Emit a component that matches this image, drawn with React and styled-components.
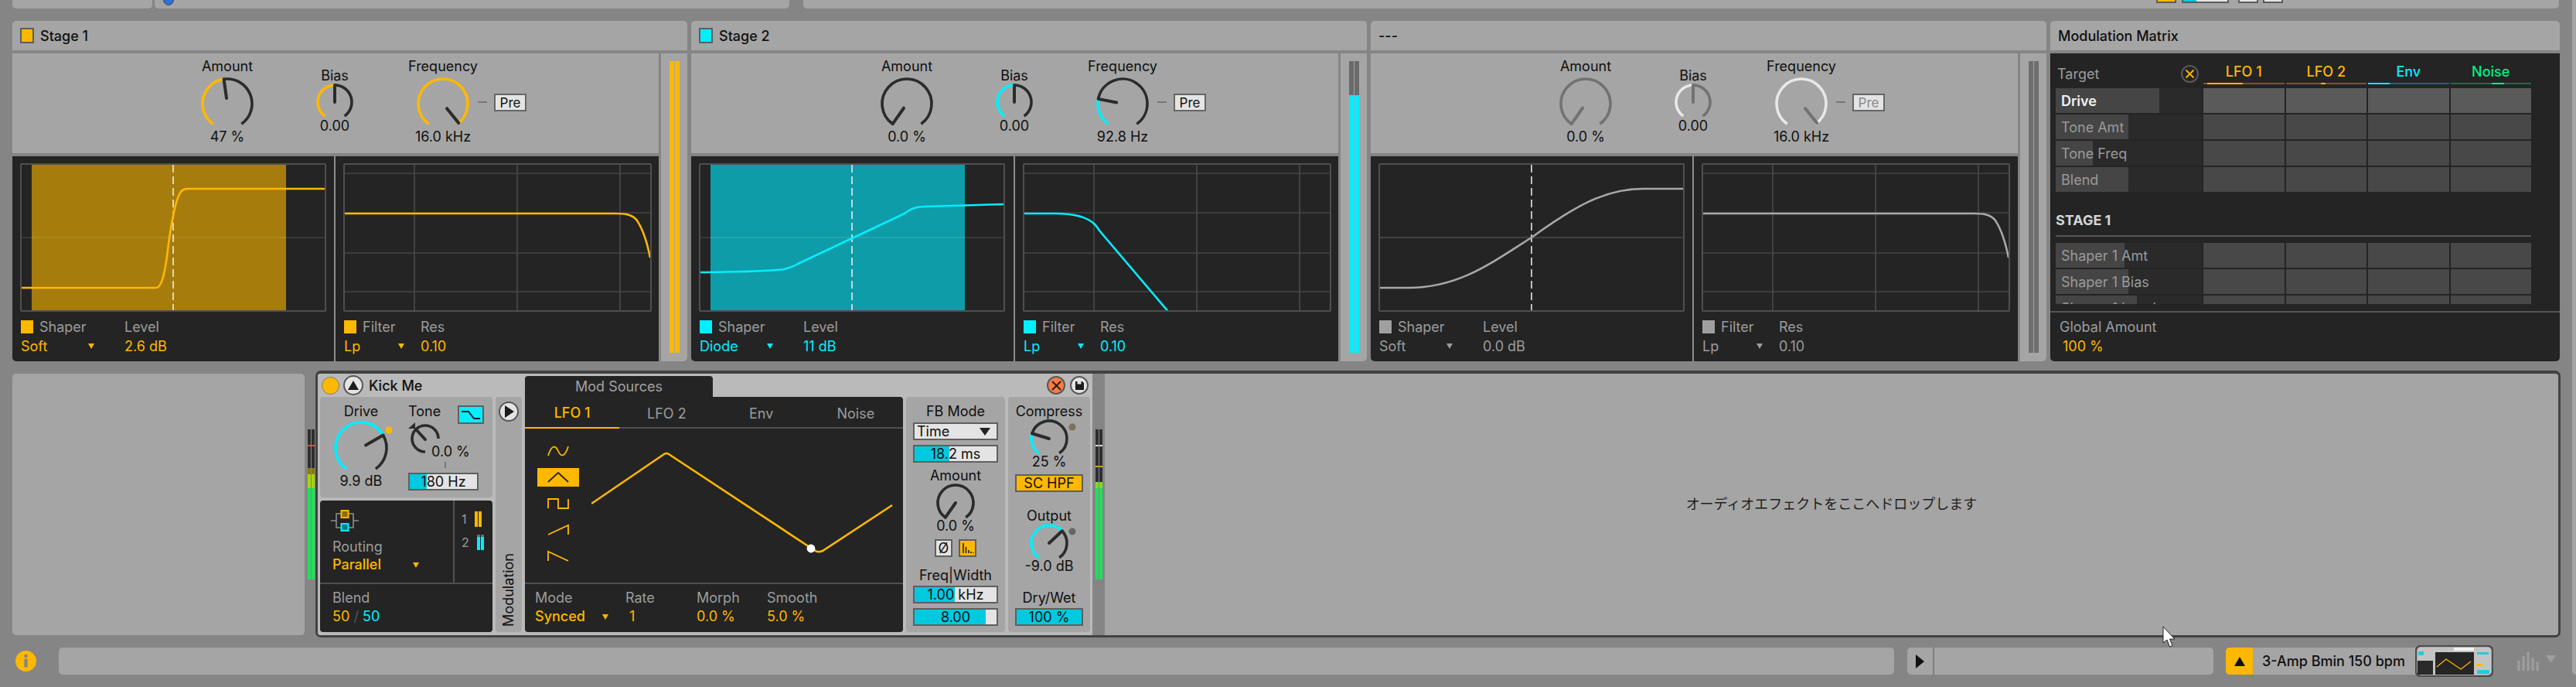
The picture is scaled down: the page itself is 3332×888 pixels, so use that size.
import React from 'react';
import styled, { createGlobalStyle } from 'styled-components';

const BG = '#858585', PANEL = '#a5a5a5', DARK = '#242424', ORANGE = '#ffb800', CYAN = '#03eeff', FILL = '#00c9e0', LIGHT = '#bababa';

const Global = createGlobalStyle`
  html, body { margin: 0; padding: 0; background: ${BG}; }
  body { font-family: Inter, "Noto Sans", "Noto Sans CJK JP", sans-serif; font-size: 18px; color: #101010; }
  * { box-sizing: border-box; }
`;

const Page = styled.div`position: relative; display: flex; width: 3332px; height: 888px; overflow: hidden; background: ${BG};`;
const Main = styled.main`width: 3327px; flex: none;`;
const SidePeek = styled.aside`width: 5px; height: 872px; flex: none; background: ${PANEL}; border-radius: 0 0 0 5px;`;

/* top strip */
const TopStrip = styled.div`display: flex; height: 11px; padding-left: 16px; overflow: hidden;`;
const TopSeg = styled.div`
  display: flex; height: 11px; width: ${p => p.$w}px; margin-left: ${p => p.$ml || 0}px;
  background: ${PANEL}; border-radius: 0 0 5px 5px; overflow: hidden; justify-content: ${p => p.$end ? 'flex-end' : 'flex-start'};
  padding-right: ${p => p.$pr || 0}px;
`;
const BlueDot = styled.span`width: 14px; height: 14px; border-radius: 50%; background: #2f6fd6; margin: -7px 0 0 11px; border: 1px solid #4a4a4a;`;
const TopBtn = styled.span`
  display: block; height: 4px; width: ${p => p.$w}px; margin-left: ${p => p.$ml}px;
  border: 2px solid #5c5c5c; border-top: 0; background: ${p => p.$bg};
`;

/* upper rack */
const Rack = styled.div`display: flex; gap: 5px; height: 440px; margin-top: 16px; padding-left: 16px;`;
const Card = styled.section`display: flex; flex-direction: column; gap: 4px; width: ${p => p.$w}px;`;
const CardHead = styled.header`
  display: flex; align-items: center; gap: 8px; height: 38px; padding-left: 10px; background: ${PANEL};
  border-radius: 5px 5px 0 0; font-weight: 500;
`;
const HeadToggle = styled.span`width: 18px; height: 20px; background: ${p => p.$c}; border: 2px solid #5d5d5d;`;
const StageBody = styled.div`display: flex; gap: 3px; flex: 1; min-height: 0;`;
const StageMain = styled.div`display: flex; flex-direction: column; gap: 4px; flex: 1; min-width: 0;`;
const Controls = styled.div`display: flex; align-items: flex-start; height: 129px; padding-left: ${p => p.$pl}px; background: ${PANEL};`;
const KnobCol = styled.div`
  display: flex; flex-direction: column; align-items: center; width: 80px; flex: none;
  padding-top: ${p => p.$pt}px; margin-left: ${p => p.$ml || 0}px;
`;
const Label = styled.div`line-height: 20px; white-space: nowrap;`;
const KnobSvg = styled.svg`display: block; flex: none; margin-top: ${p => p.$mt || 0}px;`;
const Value = styled.div`line-height: 18px; white-space: nowrap; margin-top: ${p => p.$mt || 0}px;`;
const Dash = styled.span`width: 12px; height: 2px; background: #777; margin: 62px 9px 0 5px;`;
const PreBtn = styled.div`
  width: 42px; height: 23px; margin-top: 52px; border: 2px solid #666; background: #e4e4e4; display: flex; align-items: center; justify-content: center;
  color: ${p => p.$dim ? '#8a8a8a' : '#141414'}; font-size: 17px; line-height: 18px;
`;
const DarkRow = styled.div`display: flex; flex: 1; background: ${DARK}; border-radius: 0 0 0 5px;`;
const Pane = styled.div`
  width: ${p => p.$w ? `${p.$w}px` : 'auto'}; flex: ${p => p.$w ? 'none' : 1}; padding: 9px 10px 0 ${p => p.$pl}px;
  border-right: ${p => p.$div ? '2px solid #8e8e8e' : '0'};
`;
const GraphBox = styled.div`width: ${p => p.$w}px; height: 192px; border: 2px solid #4f4f4f; border-radius: 2px; overflow: hidden;`;
const GraphSvg = styled.svg`display: block;`;
const ParamGrid = styled.div`
  display: grid; grid-template-columns: ${p => p.$col}px auto; justify-content: start; margin-top: 7px; line-height: 25px;
  color: #9c9c9c; padding-left: 1px;
`;
const ToggleLabel = styled.div`display: flex; align-items: center; gap: 8px;`;
const SmallToggle = styled.span`width: 16px; height: 17px; background: ${p => p.$c};`;
const PickVal = styled.div`display: flex; align-items: center; justify-content: space-between; width: ${p => p.$w}px; color: ${p => p.$c};`;
const Val = styled.div`color: ${p => p.$c};`;
const Strong = styled.span`font-weight: 500;`;
const Caret = styled.span`
  width: 0; height: 0; border-left: 4.5px solid transparent; border-right: 4.5px solid transparent;
  border-top: 7px solid ${p => p.$c}; flex: none;
`;
const MeterStrip = styled.div`display: flex; justify-content: center; gap: 1px; width: 34px; background: ${PANEL}; padding: 10px 0 11px; border-radius: 0 0 5px 0;`;
const StripBar = styled.span`
  width: 6px; background: linear-gradient(${p => p.$top} ${p => p.$split}px, ${p => p.$c} ${p => p.$split}px);
`;

/* matrix */
const MatrixBody = styled.div`display: flex; flex-direction: column; flex: 1; background: ${DARK}; border-radius: 0 0 5px 5px;`;
const MatrixScroll = styled.div`height: 324px; overflow: hidden; padding: 8px 0 0 7px;`;
const MatrixGrid = styled.div`display: grid; grid-template-columns: 189px repeat(4, 104.5px); column-gap: 2px; row-gap: 2px; grid-auto-rows: 32px;`;
const MatrixHead = styled(MatrixGrid)`margin-bottom: 5px;`;
const TargetCell = styled.div`display: flex; align-items: center; justify-content: space-between; padding: 4px 4px 0 2px; color: #9c9c9c;`;
const ClearBtn = styled.span`display: flex; width: 23px; height: 23px; border: 2px solid #585858; border-radius: 50%; align-items: center; justify-content: center;`;
const ColHead = styled.div`display: flex; flex-direction: column; align-items: center; padding-top: 4px; color: ${p => p.$c}; line-height: 24px; font-weight: 500;`;
const ColBar = styled.span`
  display: block; align-self: stretch; height: 2px; margin-top: 2px;
  background: linear-gradient(to right, ${p => p.$dim} ${p => p.$a}%, ${p => p.$c} ${p => p.$a}%, ${p => p.$c} ${p => p.$b}%, ${p => p.$dim} ${p => p.$b}%);
`;
const RowLabel = styled.div`
  display: flex; align-items: center; padding-left: 7px; white-space: nowrap;
  color: ${p => p.$on ? '#f2f2f2' : '#9a9a9a'}; font-weight: ${p => p.$on ? 600 : 400};
  background: linear-gradient(to right, #454545 ${p => p.$w}px, #2a2a2a ${p => p.$w}px);
`;
const Cell = styled.div`background: ${p => p.$on ? '#5a5a5a' : '#484848'};`;
const GroupHead = styled.div`margin-top: 24px; line-height: 26px; font-weight: 700; color: #d4d4d4;`;
const GroupRule = styled.div`width: 615px; height: 2px; margin: 6px 0 8px; background: #555;`;
const MatrixFoot = styled.div`margin-top: 9px; padding: 6px 0 0 12px; border-top: 2px solid #555; line-height: 25px; color: #9c9c9c;`;
const FootVal = styled.div`color: ${ORANGE}; padding-left: 4px;`;

/* device row */
const DeviceRow = styled.div`display: flex; height: 345px; margin-top: 12px; padding-left: 16px;`;
const EmptyCard = styled.div`width: 378px; height: 338px; margin-top: 4px; background: ${PANEL}; border-radius: 5px;`;
const MeterHolder = styled.div`display: flex; gap: 1px; flex: none; width: ${p => p.$w}px; padding: ${p => p.$pt}px 0 0 ${p => p.$pl}px; background: ${p => p.$bg || 'transparent'};`;
const MeterBar = styled.span`display: block; width: 4px; height: 194px; background: ${p => p.$g};`;
const ChainFrame = styled.div`
  display: flex; width: 2904.5px; margin-left: 0.5px; border: solid #424242; border-width: 4px 3px 3px 3px; border-radius: 7px; background: ${PANEL}; overflow: hidden;
`;
const Device = styled.div`display: flex; gap: 4px; width: 1002.5px; padding: 0 4px 4px 3.5px; background: ${LIGHT}; flex: none;`;
const DevCol = styled.div`display: flex; flex-direction: column; width: ${p => p.$w}px; flex: none;`;
const TitleRow = styled.div`display: flex; align-items: center; height: 30px; padding-left: 2px; gap: 5px; font-weight: 500; flex: none;`;
const PowerDot = styled.span`width: 23px; height: 23px; border-radius: 50%; background: ${ORANGE}; border: 1.5px solid #7a7a7a;`;
const RoundBtn = styled.span`
  display: flex; align-items: center; justify-content: center; width: ${p => p.$s}px; height: ${p => p.$s}px; border-radius: 50%;
  background: ${p => p.$bg || '#e4e4e4'}; border: 2.5px solid #585858; flex: none;
`;
const DeviceName = styled.span`margin-left: 2px; font-weight: 500;`;
const GrayPanel = styled.div`
  display: flex; background: ${PANEL}; border-radius: 4px; flex: ${p => p.$h ? 'none' : 1}; height: ${p => p.$h ? `${p.$h}px` : 'auto'};
  flex-direction: ${p => p.$col ? 'column' : 'row'}; align-items: ${p => p.$col ? 'center' : 'stretch'}; padding-top: ${p => p.$pt || 0}px;
`;
const DriveCol = styled.div`display: flex; flex-direction: column; align-items: center; width: 106px; padding-top: 10px;`;
const ToneCol = styled.div`display: flex; flex-direction: column; width: 98px; margin-left: 8px; padding-top: 10px;`;
const ToneTop = styled.div`display: flex; height: 25px; align-items: flex-start;`;
const ToneLabel = styled.div`width: 40px; text-align: center; line-height: 18px;`;
const LpBtn = styled.div`display: flex; width: 34px; height: 24px; margin: 1px 0 0 24px; background: ${CYAN}; border: 2px solid #5f5f5f; align-items: center; justify-content: center;`;
const ToneMid = styled.div`display: flex; height: 48px; margin-top: -3px; align-items: flex-start;`;
const ToneValue = styled.div`align-self: flex-end; margin-left: -14px; line-height: 18px; white-space: nowrap;`;
const Tick = styled.span`display: block; width: 2px; height: 8px; background: #777; margin: 4px 0 0 47px;`;
const SliderBox = styled.div`
  position: relative; display: flex; align-items: center; justify-content: center; flex: none;
  width: ${p => p.$w}px; height: 23px; margin-top: ${p => p.$mt || 0}px; border: 2px solid #5f5f5f; line-height: 19px;
  background: linear-gradient(to right, ${FILL} ${p => p.$pct}%, #e4e4e4 ${p => p.$pct}%);
`;
const DarkPanel = styled.div`background: ${DARK}; border-radius: ${p => p.$r || '4px'}; color: #9c9c9c;`;
const RoutingPanel = styled(DarkPanel)`display: flex; flex-direction: column; margin-top: 4px; height: 170px;`;
const RoutingTop = styled.div`display: flex; height: 106px;`;
const RoutingLeft = styled.div`width: 174px; padding: 12px 0 0 14px; border-right: 2px solid #505050;`;
const RoutingSvg = styled.svg`display: block;`;
const RoutingText = styled.div`line-height: 20px; margin-top: ${p => p.$mt}px; padding-left: 2px;`;
const RoutingRight = styled.div`display: flex; flex-direction: column; gap: 10px; padding: 14px 0 0 9px;`;
const ChainMeter = styled.div`display: flex; align-items: center; gap: 10px; height: 20px; font-size: 16px;`;
const ChainBars = styled.span`display: flex; gap: 1px;`;
const ChainBar = styled.span`width: 4px; height: 20px; background: linear-gradient(${p => p.$top} ${p => p.$split}px, ${p => p.$c} ${p => p.$split}px);`;
const BottomParams = styled.div`display: flex; border-top: 2px solid #505050; padding: 6px 0 0 ${p => p.$pl}px; line-height: 24px;`;
const ParamCol = styled.div`width: ${p => p.$w}px; flex: none;`;
const ModColumn = styled.div`
  display: flex; flex-direction: column; align-items: center; justify-content: space-between; width: 34px; height: 304px; margin-top: 30px; flex: none;
  background: ${PANEL}; border-radius: 4px; padding: 6px 0 7px;
`;
const PlayBtn = styled(RoundBtn)`padding-left: 2px;`;
const VerticalText = styled.div`writing-mode: vertical-rl; transform: rotate(180deg); line-height: 20px;`;
const TabHead = styled.div`
  display: flex; align-items: center; justify-content: center; width: 243px; height: 27px; margin-top: 3px; flex: none;
  background: ${DARK}; border-radius: 4px 4px 0 0; color: #a2a2a2;
`;
const ModPanel = styled(DarkPanel)`display: flex; flex-direction: column; height: 304px; border-radius: 0 4px 4px 4px;`;
const TabRow = styled.div`display: grid; grid-template-columns: repeat(4, 1fr); height: 41px; border-bottom: 2px solid #505050; flex: none;`;
const Tab = styled.div`
  display: flex; align-items: center; justify-content: center; height: 41px; padding-top: 1px;
  color: ${p => p.$on ? ORANGE : '#9c9c9c'}; font-weight: ${p => p.$on ? 500 : 400}; border-bottom: ${p => p.$on ? `2px solid ${ORANGE}` : '0'};
`;
const ShapeArea = styled.div`display: flex; height: 199px; flex: none;`;
const ShapeCol = styled.div`display: flex; flex-direction: column; gap: 10px; width: 86px; padding: 17px 0 0 16px; flex: none;`;
const ShapeBtn = styled.div`display: flex; width: 54px; height: 24px; align-items: center; justify-content: center; background: ${p => p.$on ? ORANGE : 'transparent'};`;
const SelectBox = styled.div`
  display: flex; align-items: center; justify-content: space-between; flex: none; width: 110px; height: 23px; margin-top: 5px; padding: 0 8px 0 3px;
  background: #e4e4e4; border: 2px solid #5f5f5f; line-height: 19px;
`;
const SelectCaret = styled.span`width: 0; height: 0; border-left: 7px solid transparent; border-right: 7px solid transparent; border-top: 10px solid #222;`;
const PanelLabel = styled.div`line-height: 18px; white-space: nowrap; margin-top: ${p => p.$mt || 0}px; flex: none;`;
const MiniRow = styled.div`display: flex; gap: 8px; margin-top: 8px;`;
const MiniBtn = styled.div`display: flex; width: 23px; height: 23px; align-items: center; justify-content: center; background: ${p => p.$bg}; border: 2px solid #5f5f5f; line-height: 18px;`;
const ActiveBtn = styled.div`display: flex; width: 88px; height: 23px; margin-top: 7px; align-items: center; justify-content: center; background: ${ORANGE}; border: 2px solid #5f5f5f; line-height: 19px; flex: none;`;
const HeaderBtns = styled.div`display: flex; align-items: center; justify-content: flex-end; gap: 6px; height: 30px; padding-right: 2px; flex: none;`;
const DropZone = styled.div`flex: 1; display: flex; align-items: center; justify-content: center; color: #1d1d1d; font-family: "Noto Sans CJK JP", sans-serif; font-size: 18px; padding: 0 0 4px 0;`;

/* status */
const StatusBar = styled.footer`display: flex; align-items: center; height: 41px; margin-top: 10px; padding-left: 20px;`;
const InfoIcon = styled.svg`display: block; flex: none;`;
const LongBar = styled.div`
  display: flex; height: 35px; width: ${p => p.$w}px; margin-left: ${p => p.$ml}px; background: ${PANEL}; border-radius: 5px; flex: none;
`;
const PlayCell = styled.div`display: flex; width: 35px; align-items: center; justify-content: center; border-right: 2px solid #7d7d7d;`;
const PlayGlyph = styled.span`width: 0; height: 0; border-top: 9px solid transparent; border-bottom: 9px solid transparent; border-left: 11px solid #111;`;
const SetBar = styled(LongBar)`align-items: center; width: 250px; margin-left: 16px; border-radius: 5px 0 0 5px;`;
const SetIcon = styled.div`display: flex; width: 35px; height: 35px; align-items: center; justify-content: center; background: ${ORANGE}; border-radius: 5px 0 0 5px;`;
const UpGlyph = styled.span`width: 0; height: 0; border-left: 7px solid transparent; border-right: 7px solid transparent; border-bottom: 12px solid #111;`;
const SetName = styled.div`margin-left: 12px; font-weight: 500; font-size: 18px; white-space: nowrap;`;
const Thumb = styled.svg`display: block; flex: none; margin-left: -5px;`;
const CpuIcon = styled.svg`display: block; flex: none; margin-left: 31px;`;
const Cursor = styled.svg`position: absolute; left: 2797px; top: 809px;`;

/* drawing helpers */
const pt = (cx, cy, r, deg) => {
  const a = deg * Math.PI / 180;
  return [cx + r * Math.sin(a), cy - r * Math.cos(a)];
};
const arc = (cx, cy, r, a0, a1) => {
  const [x0, y0] = pt(cx, cy, r, a0);
  const [x1, y1] = pt(cx, cy, r, a1);
  return `M${x0} ${y0} A${r} ${r} 0 ${a1 - a0 > 180 ? 1 : 0} 1 ${x1} ${y1}`;
};
const Knob = ({ r, w, h, angle, on, track = '#2b2b2b', ptr = '#2b2b2b', inner = 0, dot, mt, end = angle }) => {
  const cx = w / 2, cy = h / 2;
  const [x0, y0] = pt(cx, cy, inner, angle);
  const [x1, y1] = pt(cx, cy, r, angle);
  return (
    <KnobSvg width={w} height={h} viewBox={`0 0 ${w} ${h}`} $mt={mt}>
      {end > -145 && <path d={arc(cx, cy, r, -145, end)} fill="none" stroke={on} strokeWidth="3.6" />}
      {end < 145 && <path d={arc(cx, cy, r, end, 145)} fill="none" stroke={track} strokeWidth="3.6" />}
      <line x1={x0} y1={y0} x2={x1} y2={y1} stroke={ptr} strokeWidth="4" strokeLinecap="round" />
      {dot && <circle cx={cx + dot.dx} cy={cy + dot.dy} r={dot.r} fill={dot.c} />}
    </KnobSvg>
  );
};

const ShaperGraph = ({ color, shade, curve, dashX = 196 }) => (
  <GraphSvg width="392" height="188" viewBox="0 0 392 188">
    {shade && <rect x="13" y="0" width="329" height="188" fill={shade} />}
    <line x1="0" y1="94" x2="392" y2="94" stroke={shade ? 'rgba(255,255,255,.13)' : '#4a4a4a'} strokeWidth="1.5" />
    <line x1={dashX} y1="0" x2={dashX} y2="188" stroke="#f2f2f2" strokeWidth="1.5" strokeDasharray="10 5" />
    <path d={curve} fill="none" stroke={color} strokeWidth="2.6" strokeLinejoin="round" />
  </GraphSvg>
);
const FilterGraph = ({ color, curve }) => (
  <GraphSvg width="395" height="188" viewBox="0 0 395 188">
    {[90, 223, 356].map(x => <line key={x} x1={x} y1="0" x2={x} y2="188" stroke="#4c4c4c" strokeWidth="1.5" />)}
    {[11, 62, 114, 164].map(y => <line key={y} x1="0" y1={y} x2="395" y2={y} stroke="#444" strokeWidth="1.5" />)}
    <path d={curve} fill="none" stroke={color} strokeWidth="2.6" />
  </GraphSvg>
);

const FLAT_LP = 'M0 63 H350 C362 63 372 64 378 72 C386 84 391 100 395 120';

const stages = [
  {
    w: 873, pl: 238, name: 'Stage 1', toggle: ORANGE, c: ORANGE, shape: 'Soft', level: '2.6 dB', shade: '#a67c0c',
    amount: '47 %', amtA: -8, amtOn: ORANGE, bias: ORANGE, freq: '16.0 kHz', freqA: 141, freqOn: ORANGE,
    shaper: 'M0 159 H174 C181 159 185 140 188 118 C192 85 198 50 204 38 C207 32 210 31 216 31 H392',
    filter: FLAT_LP,
    stripC: ORANGE, stripTop: ORANGE, split: 0, mainW: 418,
  },
  {
    w: 874, pl: 239, name: 'Stage 2', toggle: CYAN, c: CYAN, shape: 'Diode', level: '11 dB', shade: '#0e9ca8',
    amount: '0.0 %', amtA: -145, amtOn: '#2b2b2b', bias: CYAN, freq: '92.8 Hz', freqA: -79, freqOn: CYAN,
    shaper: 'M0 139 C50 138 92 138 108 135 C116 133 120 132 126 128 L264 63 C272 56 280 54 290 54 L392 51',
    filter: 'M0 63 H40 C62 63 80 66 91 77 C94 80 95 82 97 85 L188 192',
    stripC: CYAN, stripTop: '#6a6a6a', split: 44, mainW: 419,
  },
  {
    w: 874, pl: 238, name: '---', toggle: null, c: '#a8a8a8', vc: '#9c9c9c', shape: 'Soft', level: '0.0 dB', shade: null, off: true,
    amount: '0.0 %', amtA: -145, amtOn: '#727272', bias: '#e8e8e8', freq: '16.0 kHz', freqA: 141, freqOn: '#e8e8e8',
    shaper: 'M0 159 H36 C100 159 140 130 196 94 C250 55 290 31 340 31 H392',
    filter: FLAT_LP,
    stripC: '#6e6e6e', stripTop: '#6e6e6e', split: 0, mainW: 418,
  },
];

const Stage = ({ s }) => {
  const ptr = s.off ? '#727272' : '#2b2b2b';
  const track = s.off ? '#727272' : '#2b2b2b';
  const vc = s.vc || s.c;
  return (
    <Card $w={s.w}>
      <CardHead>
        {s.toggle && <HeadToggle $c={s.toggle} />}
        <span>{s.name}</span>
      </CardHead>
      <StageBody>
        <StageMain>
          <Controls $pl={s.pl}>
            <KnobCol $pt={7}>
              <Label>Amount</Label>
              <Knob r={32} w={72} h={68} angle={s.amtA} on={s.amtOn} track={track} ptr={ptr} inner={7} mt={4} />
              <Value>{s.amount}</Value>
            </KnobCol>
            <KnobCol $pt={19} $ml={59}>
              <Label>Bias</Label>
              <Knob r={22} w={50} h={48} angle={0} on={s.bias} track={track} ptr={ptr} />
              <Value $mt={-2}>0.00</Value>
            </KnobCol>
            <KnobCol $pt={7} $ml={60}>
              <Label>Frequency</Label>
              <Knob r={32} w={72} h={68} angle={s.freqA} end={s.freqA > 100 ? 145 : s.freqA} on={s.freqOn} track={track} ptr={ptr} inner={8} mt={4} />
              <Value>{s.freq}</Value>
            </KnobCol>
            <Dash />
            <PreBtn $dim={s.off}>Pre</PreBtn>
          </Controls>
          <DarkRow>
            <Pane $w={s.mainW} $pl={10} $div>
              <GraphBox $w={396}>
                <ShaperGraph color={s.c} shade={s.shade} curve={s.shaper} />
              </GraphBox>
              <ParamGrid $col={134}>
                <ToggleLabel><SmallToggle $c={s.off ? '#a0a0a0' : s.c} />Shaper</ToggleLabel>
                <div>Level</div>
                <PickVal $w={95} $c={vc}>{s.shape}<Caret $c={vc} /></PickVal>
                <Val $c={vc}>{s.level}</Val>
              </ParamGrid>
            </Pane>
            <Pane $pl={10}>
              <GraphBox $w={399}>
                <FilterGraph color={s.c} curve={s.filter} />
              </GraphBox>
              <ParamGrid $col={99}>
                <ToggleLabel><SmallToggle $c={s.off ? '#a0a0a0' : s.c} />Filter</ToggleLabel>
                <div>Res</div>
                <PickVal $w={78} $c={vc}>Lp<Caret $c={vc} /></PickVal>
                <Val $c={vc}>0.10</Val>
              </ParamGrid>
            </Pane>
          </DarkRow>
        </StageMain>
        <MeterStrip>
          <StripBar $c={s.stripC} $top={s.stripTop} $split={s.split} />
          <StripBar $c={s.stripC} $top={s.stripTop} $split={s.split} />
        </MeterStrip>
      </StageBody>
    </Card>
  );
};

const cols = [
  { n: 'LFO 1', c: ORANGE, dim: '#7a5c10', a: 5, b: 49 },
  { n: 'LFO 2', c: ORANGE, dim: '#7a5c10', a: 43, b: 49 },
  { n: 'Env', c: CYAN, dim: '#0d6f78', a: 0, b: 27 },
  { n: 'Noise', c: '#00ef87', dim: '#0c7447', a: 51, b: 66 },
];
const MatrixRow = ({ name, w, on }) => (
  <>
    <RowLabel $w={w} $on={on}>{name}</RowLabel>
    {cols.map(c => <Cell key={c.n} $on={on} />)}
  </>
);

const Matrix = () => (
  <Card $w={659}>
    <CardHead><span>Modulation Matrix</span></CardHead>
    <MatrixBody>
      <MatrixScroll>
        <MatrixHead>
          <TargetCell>
            Target
            <ClearBtn>
              <svg width="13" height="13" viewBox="0 0 13 13"><path d="M1.5 1.5 L11.5 11.5 M11.5 1.5 L1.5 11.5" stroke={ORANGE} strokeWidth="1.8" /></svg>
            </ClearBtn>
          </TargetCell>
          {cols.map(c => (
            <ColHead key={c.n} $c={c.c}>{c.n}<ColBar $c={c.c} $dim={c.dim} $a={c.a} $b={c.b} /></ColHead>
          ))}
        </MatrixHead>
        <MatrixGrid>
          <MatrixRow name="Drive" w={134} on />
          <MatrixRow name="Tone Amt" w={94} />
          <MatrixRow name="Tone Freq" w={48} />
          <MatrixRow name="Blend" w={94} />
        </MatrixGrid>
        <GroupHead>STAGE 1</GroupHead>
        <GroupRule />
        <MatrixGrid>
          <MatrixRow name="Shaper 1 Amt" w={89} />
          <MatrixRow name="Shaper 1 Bias" w={94} />
          <MatrixRow name="Shaper 1 Level" w={105} />
        </MatrixGrid>
      </MatrixScroll>
      <MatrixFoot>
        Global Amount
        <FootVal>100 %</FootVal>
      </MatrixFoot>
    </MatrixBody>
  </Card>
);

const leftMeter = 'linear-gradient(#2e2e2e 20px, #c85a3a 20px, #c85a3a 22px, #2e2e2e 22px, #2e2e2e 50px, #8a7a12 50px, #8a7a12 58px, #a6d40a 58px, #a6d40a 76px, #1fe05a 76px)';
const rightMeter = 'linear-gradient(#2e2e2e 20px, #d8d8d8 20px, #d8d8d8 22px, #2e2e2e 22px, #2e2e2e 47px, #e8a800 47px, #e8a800 49px, #2e2e2e 49px, #2e2e2e 68px, #7fdc1a 68px, #7fdc1a 76px, #1fe05a 76px)';

const Shapes = () => {
  const dark = '#242424';
  return (
    <ShapeCol>
      <ShapeBtn><svg width="30" height="18" viewBox="0 0 30 18"><path d="M2 15 C6 2 11 0 15 9 C19 18 24 16 28 3" fill="none" stroke={ORANGE} strokeWidth="1.8" /></svg></ShapeBtn>
      <ShapeBtn $on><svg width="30" height="16" viewBox="0 0 30 16"><path d="M2 14 L15 2 L28 14" fill="none" stroke={dark} strokeWidth="1.8" /></svg></ShapeBtn>
      <ShapeBtn><svg width="30" height="16" viewBox="0 0 30 16"><path d="M2 14 V2 H15 V14 H28 V2" fill="none" stroke={ORANGE} strokeWidth="1.8" /></svg></ShapeBtn>
      <ShapeBtn><svg width="30" height="16" viewBox="0 0 30 16"><path d="M2 14 L28 2 V14" fill="none" stroke={ORANGE} strokeWidth="1.8" /></svg></ShapeBtn>
      <ShapeBtn><svg width="30" height="16" viewBox="0 0 30 16"><path d="M2 14 V2 L28 14" fill="none" stroke={ORANGE} strokeWidth="1.8" /></svg></ShapeBtn>
    </ShapeCol>
  );
};

const KickDevice = () => (
  <Device>
    <DevCol $w={223}>
      <TitleRow>
        <PowerDot />
        <RoundBtn $s={26}>
          <svg width="14" height="12" viewBox="0 0 14 12"><path d="M7 0 L14 12 H0 Z" fill="#1c1c1c" /></svg>
        </RoundBtn>
        <DeviceName>Kick Me</DeviceName>
      </TitleRow>
      <GrayPanel $h={130}>
        <DriveCol>
          <PanelLabel>Drive</PanelLabel>
          <Knob r={33} w={92} h={76} angle={60} on={CYAN} inner={7} dot={{ dx: 36, dy: -23, r: 4.5, c: ORANGE }} />
          <Value $mt={-4}>9.9 dB</Value>
        </DriveCol>
        <ToneCol>
          <ToneTop>
            <ToneLabel>Tone</ToneLabel>
            <LpBtn>
              <svg width="28" height="18" viewBox="0 0 28 18"><path d="M2 5 H11 L18 14 H26" fill="none" stroke="#1c1c1c" strokeWidth="2" /></svg>
            </LpBtn>
          </ToneTop>
          <ToneMid>
            <KnobSvg width="44" height="44" viewBox="0 0 44 44">
              <path d={arc(22, 22, 17, -180, 90)} fill="none" stroke="#2b2b2b" strokeWidth="3.6" />
              <line x1="22" y1="23" x2="10" y2="10" stroke="#2b2b2b" strokeWidth="4" strokeLinecap="round" />
              <path d="M0 9 L9 1 V9 Z" fill="#2b2b2b" />
            </KnobSvg>
            <ToneValue>0.0 %</ToneValue>
          </ToneMid>
          <Tick />
          <SliderBox $w={91} $mt={6} $pct={25}>180 Hz</SliderBox>
        </ToneCol>
      </GrayPanel>
      <RoutingPanel>
        <RoutingTop>
          <RoutingLeft>
            <RoutingSvg width="36" height="28" viewBox="0 0 36 28">
              <path d="M0 14 H7 M29 14 H36 M7 14 V5 H13 M7 14 V23 H13 M29 14 V5 H23 M29 14 V23 H23" fill="none" stroke="#8d8d8d" strokeWidth="1.6" />
              <rect x="13.5" y="1" width="9" height="9" fill="#8a6a14" stroke={ORANGE} strokeWidth="2" />
              <rect x="13.5" y="18" width="9" height="9" fill="#0e7f8a" stroke={CYAN} strokeWidth="2" />
            </RoutingSvg>
            <RoutingText $mt={10}>Routing</RoutingText>
            <RoutingText $mt={3}>
              <PickVal $w={112} $c={ORANGE}><Strong>Parallel</Strong><Caret $c={ORANGE} /></PickVal>
            </RoutingText>
          </RoutingLeft>
          <RoutingRight>
            <ChainMeter>1<ChainBars><ChainBar $c={ORANGE} $top={ORANGE} $split={0} /><ChainBar $c={ORANGE} $top={ORANGE} $split={0} /></ChainBars></ChainMeter>
            <ChainMeter>2<ChainBars><ChainBar $c={CYAN} $top="#6a6a6a" $split={3} /><ChainBar $c={CYAN} $top="#6a6a6a" $split={3} /></ChainBars></ChainMeter>
          </RoutingRight>
        </RoutingTop>
        <BottomParams $pl={16}>
          <div>
            Blend
            <div><Val as="span" $c={ORANGE}>50</Val><Val as="span" $c="#555"> / </Val><Val as="span" $c={CYAN}>50</Val></div>
          </div>
        </BottomParams>
      </RoutingPanel>
    </DevCol>
    <ModColumn>
      <PlayBtn $s={26}>
        <svg width="12" height="16" viewBox="0 0 12 16"><path d="M0 0 L12 8 L0 16 Z" fill="#1c1c1c" /></svg>
      </PlayBtn>
      <VerticalText>Modulation</VerticalText>
    </ModColumn>
    <DevCol $w={489}>
      <TabHead>Mod Sources</TabHead>
      <ModPanel>
        <TabRow>
          <Tab $on>LFO 1</Tab><Tab>LFO 2</Tab><Tab>Env</Tab><Tab>Noise</Tab>
        </TabRow>
        <ShapeArea>
          <Shapes />
          <svg width="403" height="199" viewBox="0 0 403 199">
            <path d="M0 97 L94 33 Q97 31 100 33 L288 157 Q293 161 299 158 L389 99" fill="none" stroke={ORANGE} strokeWidth="2.6" />
            <circle cx="284" cy="155" r="5.4" fill="#fff" />
          </svg>
        </ShapeArea>
        <BottomParams $pl={13}>
          <ParamCol $w={117}>Mode<PickVal $w={95} $c={ORANGE}><Strong>Synced</Strong><Caret $c={ORANGE} /></PickVal></ParamCol>
          <ParamCol $w={92}>Rate<Val $c={ORANGE}>&nbsp;1</Val></ParamCol>
          <ParamCol $w={91}>Morph<Val $c={ORANGE}>0.0 %</Val></ParamCol>
          <ParamCol $w={100}>Smooth<Val $c={ORANGE}>5.0 %</Val></ParamCol>
        </BottomParams>
      </ModPanel>
    </DevCol>
    <DevCol $w={128}>
      <HeaderBtns />
      <GrayPanel $col $pt={10}>
        <PanelLabel>FB Mode</PanelLabel>
        <SelectBox>Time<SelectCaret /></SelectBox>
        <SliderBox $w={110} $mt={6} $pct={42}>18.2 ms</SliderBox>
        <PanelLabel $mt={8}>Amount</PanelLabel>
        <Knob r={23} w={56} h={52} angle={-145} on="#2b2b2b" />
        <Value $mt={-5}>0.0 %</Value>
        <MiniRow>
          <MiniBtn $bg="#e4e4e4">Ø</MiniBtn>
          <MiniBtn $bg={ORANGE}>
            <svg width="16" height="16" viewBox="0 0 16 16"><path d="M2 1 V14 M5.5 6 V14 M9 10 V14 M12 12 V14 M15 13 V14" stroke="#222" strokeWidth="1.6" /></svg>
          </MiniBtn>
        </MiniRow>
        <PanelLabel $mt={15}>Freq|Width</PanelLabel>
        <SliderBox $w={110} $mt={4} $pct={49}>1.00 kHz</SliderBox>
        <SliderBox $w={110} $mt={6} $pct={87}>8.00</SliderBox>
      </GrayPanel>
    </DevCol>
    <DevCol $w={106}>
      <HeaderBtns>
        <RoundBtn $s={24} $bg="#ff7a40">
          <svg width="13" height="13" viewBox="0 0 13 13"><path d="M1 1 L12 12 M12 1 L1 12" stroke="#1c1c1c" strokeWidth="1.8" /></svg>
        </RoundBtn>
        <RoundBtn $s={24}>
          <svg width="13" height="13" viewBox="0 0 13 13"><path d="M1 1 H10 L12 3 V12 H1 Z" fill="#1c1c1c" /><rect x="3.5" y="1" width="5" height="3.5" fill="#e4e4e4" /></svg>
        </RoundBtn>
      </HeaderBtns>
      <GrayPanel $col $pt={10}>
        <PanelLabel>Compress</PanelLabel>
        <Knob r={23} w={76} h={52} angle={-73} on={CYAN} dot={{ dx: 30, dy: -15, r: 4.5, c: '#7d7158' }} />
        <Value $mt={-5}>25 %</Value>
        <ActiveBtn>SC HPF</ActiveBtn>
        <PanelLabel $mt={22}>Output</PanelLabel>
        <Knob r={23} w={76} h={52} angle={47} on={CYAN} dot={{ dx: 30, dy: -15, r: 4.5, c: '#666' }} />
        <Value $mt={-5}>-9.0 dB</Value>
        <PanelLabel $mt={23}>Dry/Wet</PanelLabel>
        <SliderBox $w={88} $mt={4} $pct={100}>100 %</SliderBox>
      </GrayPanel>
    </DevCol>
  </Device>
);

const ThumbArt = () => (
  <Thumb width="101" height="41" viewBox="0 0 101 41">
    <rect x="1" y="1" width="99" height="39" rx="6" fill="#c4c4c4" stroke="#4d4d4d" strokeWidth="2.5" />
    <rect x="3" y="20" width="20" height="18" fill="#2a2a2a" />
    <rect x="4" y="8" width="7" height="5" fill="#25c9dc" />
    <rect x="26" y="9" width="50" height="29" fill="#252525" />
    <path d="M28 28 L40 18 L59 31 L72 21" fill="none" stroke={ORANGE} strokeWidth="1.2" />
    <rect x="50" y="3" width="26" height="4" fill="#f2f2f2" />
    <rect x="79" y="24" width="8" height="3" fill={ORANGE} />
    <rect x="80" y="32" width="16" height="5" fill="#25c9dc" />
    <rect x="80" y="9" width="15" height="3" fill="#25c9dc" />
  </Thumb>
);

export default function App() {
  return (
    <Page>
      <Global />
      <Main>
        <TopStrip>
          <TopSeg $w={181} />
          <TopSeg $w={821} $ml={3}><BlueDot /></TopSeg>
          <TopSeg $w={2271} $ml={18} $end $pr={357}>
            <TopBtn $w={26} $ml={0} $bg={ORANGE} />
            <TopBtn $w={61} $ml={7} $bg={`linear-gradient(to right, ${FILL} 30%, #e4e4e4 30%)`} />
            <TopBtn $w={26} $ml={12} $bg="#e4e4e4" />
            <TopBtn $w={26} $ml={6} $bg="#e4e4e4" />
          </TopSeg>
        </TopStrip>
        <Rack>
          {stages.map(s => <Stage key={s.w + s.name} s={s} />)}
          <Matrix />
        </Rack>
        <DeviceRow>
          <EmptyCard />
          <MeterHolder $w={13} $pt={76} $pl={3.5}>
            <MeterBar $g={leftMeter} />
            <MeterBar $g={leftMeter} />
          </MeterHolder>
          <ChainFrame>
            <KickDevice />
            <MeterHolder $w={16} $pt={72} $pl={3.5} $bg={BG}>
              <MeterBar $g={rightMeter} />
              <MeterBar $g={rightMeter} />
            </MeterHolder>
            <DropZone>オーディオエフェクトをここへドロップします</DropZone>
          </ChainFrame>
        </DeviceRow>
        <StatusBar>
          <InfoIcon width="27" height="27" viewBox="0 0 27 27">
            <circle cx="13.5" cy="13.5" r="13.5" fill={ORANGE} />
            <circle cx="13.5" cy="7" r="2.3" fill={BG} />
            <rect x="11.3" y="10.5" width="4.4" height="11" fill={BG} />
          </InfoIcon>
          <LongBar $w={2374} $ml={29} />
          <LongBar $w={396} $ml={17}>
            <PlayCell><PlayGlyph /></PlayCell>
          </LongBar>
          <SetBar>
            <SetIcon><UpGlyph /></SetIcon>
            <SetName>3-Amp Bmin 150 bpm</SetName>
          </SetBar>
          <ThumbArt />
          <CpuIcon width="50" height="26" viewBox="0 0 50 26">
            <path d="M2 12 V25 M8 6 V25 M14 1 V25 M20 8 V25 M26 14 V25" stroke="#9e9e9e" strokeWidth="3.2" />
            <path d="M37 5 H50 L43.5 15 Z" fill="#9e9e9e" />
          </CpuIcon>
        </StatusBar>
      </Main>
      <SidePeek />
      <Cursor width="20" height="30" viewBox="0 0 20 30">
        <path d="M1 1 L1 22 L6 18 L9.5 27 L13 25.5 L9.5 17 L16 17 Z" fill="#fff" stroke="#222" strokeWidth="1" />
      </Cursor>
    </Page>
  );
}
